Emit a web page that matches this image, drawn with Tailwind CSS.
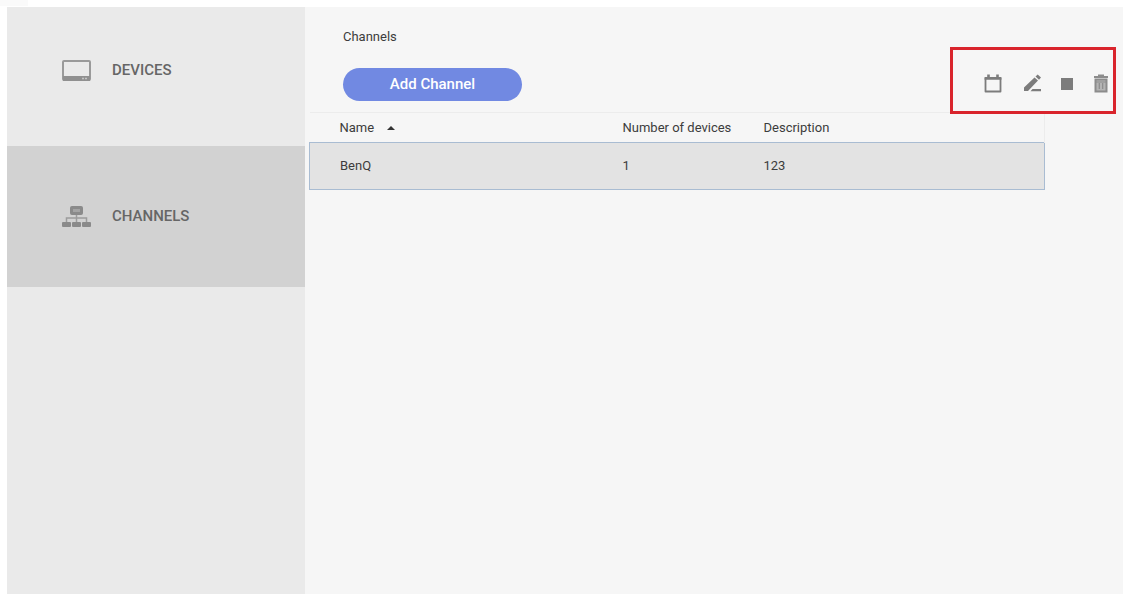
<!DOCTYPE html>
<html lang="en">
<head>
<meta charset="utf-8">
<meta name="viewport" content="width=device-width, initial-scale=1">
<title>Channels</title>
<script src="https://cdn.jsdelivr.net/npm/@tailwindcss/browser@4"></script>
</head>
<body class="flex min-h-screen flex-col bg-white pl-[7px] pb-px font-[Roboto,sans-serif] text-[#3c3c3c]">
  <div class="-ml-[7px] h-[7px] w-full">
    <div class="h-1.5 w-7 bg-[#fafafa]"></div>
  </div>
  <div class="flex flex-1">
    <nav class="w-[298px] shrink-0 bg-[#eaeaea] text-[15px] font-medium text-[#666666]">
      <a href="#devices" class="flex h-[139px] items-center gap-[21px] pl-[55px] pb-3">
        <svg class="h-[22px] w-[29px]" viewBox="0 0 29 22" fill="none">
          <rect x="1" y="1" width="27" height="19" rx="1" stroke="#9a9a9a" stroke-width="2"/>
          <path d="M1 16h27v5H1z" fill="#909090"/>
          <path d="M20 18.500h6" stroke="#c4c4c4" stroke-width="1.500" stroke-dasharray="2 1"/>
        </svg>
        <span>DEVICES</span>
      </a>
      <a href="#channels" aria-current="page" class="flex h-[141px] items-center gap-[21px] bg-[#d2d2d2] pl-[55px]">
        <svg class="h-[22px] w-[29px]" viewBox="0 0 29 22" fill="#8a8a8a">
          <rect x="8" width="13" height="9" rx="2"/>
          <path d="M11 3h7v3h-7z" fill="#a4a4a4"/>
          <path d="M14.500 9v7M4.500 16v-4h20v4" fill="none" stroke="#9c9c9c" stroke-width="1.500"/>
          <rect y="16" width="9" height="5" rx="1"/>
          <rect x="10" y="16" width="9" height="5" rx="1"/>
          <rect x="20" y="16" width="9" height="5" rx="1"/>
        </svg>
        <span>CHANNELS</span>
      </a>
    </nav>
    <main class="min-w-0 flex-1 bg-[#f6f6f6] pl-1 text-[13px]">
      <header class="flex h-[105px] items-end justify-between pr-[7px] pl-[34px]">
        <div class="flex flex-col items-start gap-[21px] pb-[11px]">
          <h1 class="leading-5">Channels</h1>
          <button type="button" class="h-[33px] w-[179px] rounded-full bg-[#7189e2] text-[15px] font-medium text-white">Add Channel</button>
        </div>
        <div role="toolbar" aria-label="Channel actions" class="-mb-[2px] flex h-[67px] w-[166px] items-center justify-end gap-4 border-[3px] border-[#d9242c] pt-1.5 text-[#7c7c7c]">
          <button type="button" aria-label="Schedule">
            <svg class="h-6 w-6" viewBox="0 0 24 24" fill="none" stroke="currentColor">
              <path d="M4.500 6h15v13.500h-15z" stroke-width="1.800" stroke-linejoin="round"/>
              <path d="M3.600 6.500h16.800M7.500 2.500v4M16.500 2.500v4" stroke-width="2.600"/>
            </svg>
          </button>
          <button type="button" aria-label="Edit">
            <svg class="h-6 w-6" viewBox="0 0 24 24" fill="currentColor">
              <path d="M3 15.500 13.500 5.500l3.500 3L7 19H3zM14.500 4.600l2.200-2 3.300 3-2 2.100zM11.500 17h8.500v2.300h-10.500z"/>
            </svg>
          </button>
          <button type="button" aria-label="Stop" class="-mx-1.5">
            <svg class="h-6 w-6" viewBox="0 0 24 24" fill="currentColor"><path d="M6 6h12v12H6z"/></svg>
          </button>
          <button type="button" aria-label="Delete" class="text-[#8c8c8c]">
            <svg class="h-6 w-6" viewBox="0 0 24 24">
              <path d="M6.500 7.500h11V19.500h-11zM5 5h14M9 3.500h6" fill="#b4b4b4" stroke="currentColor" stroke-width="2"/>
              <path d="M10.300 11v6M13.700 11v6M7 10h10" stroke="currentColor" stroke-width="1.200"/>
            </svg>
          </button>
        </div>
      </header>
      <div class="pr-[78px]">
        <table class="w-full table-fixed border-collapse text-left">
          <thead>
            <tr class="h-[30px] border-t border-r border-[#ececec]">
              <th scope="col" aria-sort="ascending" class="w-[313px] pl-[30px] font-normal">
                <button type="button" class="flex items-center gap-[13px]">Name
                  <svg class="h-1 w-2" viewBox="0 0 8 4" fill="#333333"><path d="M0 4 4 0l4 4z"/></svg>
                </button>
              </th>
              <th scope="col" class="w-[141px] font-normal">Number of devices</th>
              <th scope="col" class="font-normal">Description</th>
            </tr>
          </thead>
          <tbody>
            <tr class="h-[47px] border border-[#a9bcd2] bg-[#e3e3e3]">
              <td class="pl-[30px]">BenQ</td>
              <td>1</td>
              <td>123</td>
            </tr>
          </tbody>
        </table>
      </div>
    </main>
  </div>
</body>
</html>
